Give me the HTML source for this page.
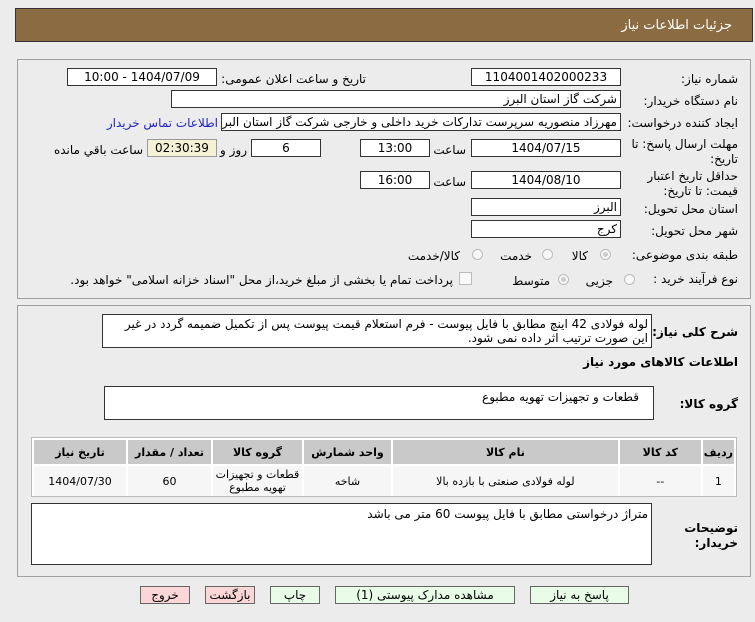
<!DOCTYPE html>
<html><head><meta charset="utf-8"><style>
body{margin:0;width:755px;height:622px;background:#ececec;position:relative;overflow:hidden;font-family:"DejaVu Sans","Liberation Sans",sans-serif;font-size:12px;color:#000}
.a{position:absolute}
.hdr{left:15px;top:8px;width:738px;height:34px;background:#8b6b42;border:1px solid #333;box-sizing:border-box}
.hdr span{position:absolute;right:20px;top:9px;color:#fff;font-size:13px}
.panel{border:1px solid #a0a0a0;background:#ececec;box-sizing:border-box}
.in{background:#fff;border:1px solid #333;box-sizing:border-box;height:18px;line-height:16px;padding:0 3px;white-space:nowrap;overflow:hidden;direction:rtl;font-size:12px}
.c{text-align:center}
.l{direction:rtl;white-space:nowrap;text-align:right}
.rad{width:11px;height:11px;border:1px solid #bbb;border-radius:50%;background:#f8f8f8;box-sizing:border-box}
.rad.on::after{content:"";position:absolute;left:2px;top:2px;width:5px;height:5px;border-radius:50%;background:#ccc}
table{border-collapse:separate;border-spacing:2px;font-size:11px}
th{background:#c9c9c9;height:22px;font-weight:bold}
td{background:#f6f6f6;height:28px;text-align:center}
.btn{height:18px;border:1px solid #666;box-sizing:border-box;text-align:center;line-height:16px;font-size:12px;background:#e8fce8}
.pk{background:#fbd6d6}
</style></head><body>
<div class="a hdr"><span>جزئیات اطلاعات نیاز</span></div>

<div class="a panel" style="left:17px;top:59px;width:734px;height:240px"></div>
<div class="a l" style="right:17px;top:72px">شماره نیاز:</div>
<div class="a in c" style="left:471px;top:68px;width:150px">1104001402000233</div>
<div class="a l" style="right:389px;top:72px">تاریخ و ساعت اعلان عمومی:</div>
<div class="a in c" style="left:67px;top:68px;width:150px">1404/07/09 - 10:00</div>

<div class="a l" style="right:17px;top:94px">نام دستگاه خریدار:</div>
<div class="a in" style="left:171px;top:90px;width:450px">شرکت گاز استان البرز</div>

<div class="a l" style="right:17px;top:116px">ایجاد کننده درخواست:</div>
<div class="a in" style="left:221px;top:113px;width:400px">مهرزاد منصوریه سرپرست تدارکات خرید داخلی و خارجی شرکت گاز استان البرز</div>
<div class="a l" style="right:537px;top:116px;color:#2222cc">اطلاعات تماس خریدار</div>

<div class="a l" style="right:17px;top:137px;line-height:15px">مهلت ارسال پاسخ: تا<br>تاریخ:</div>
<div class="a in c" style="left:471px;top:139px;width:150px">1404/07/15</div>
<div class="a l" style="right:289px;top:143px">ساعت</div>
<div class="a in c" style="left:360px;top:139px;width:70px">13:00</div>
<div class="a in c" style="left:251px;top:139px;width:70px">6</div>
<div class="a l" style="right:508px;top:143px">روز و</div>
<div class="a in c" style="left:147px;top:139px;width:70px;background:#f4f2d4;border-color:#999">02:30:39</div>
<div class="a l" style="right:612px;top:143px">ساعت باقي مانده</div>

<div class="a l" style="right:17px;top:169px;line-height:15px">حداقل تاریخ اعتبار<br>قیمت: تا تاریخ:</div>
<div class="a in c" style="left:471px;top:171px;width:150px">1404/08/10</div>
<div class="a l" style="right:289px;top:175px">ساعت</div>
<div class="a in c" style="left:360px;top:171px;width:70px">16:00</div>

<div class="a l" style="right:17px;top:202px">استان محل تحویل:</div>
<div class="a in" style="left:471px;top:198px;width:150px">البرز</div>
<div class="a l" style="right:17px;top:224px">شهر محل تحویل:</div>
<div class="a in" style="left:471px;top:220px;width:150px">کرج</div>

<div class="a l" style="right:17px;top:248px">طبقه بندی موضوعی:</div>
<div class="a rad on" style="left:600px;top:249px"></div><div class="a l" style="right:167px;top:249px">کالا</div>
<div class="a rad" style="left:542px;top:249px"></div><div class="a l" style="right:223px;top:249px">خدمت</div>
<div class="a rad" style="left:472px;top:249px"></div><div class="a l" style="right:295px;top:249px">کالا/خدمت</div>

<div class="a l" style="right:17px;top:272px">نوع فرآیند خرید :</div>
<div class="a rad" style="left:624px;top:274px"></div><div class="a l" style="right:142px;top:274px">جزیی</div>
<div class="a rad on" style="left:558px;top:274px"></div><div class="a l" style="right:205px;top:274px">متوسط</div>
<div class="a" style="left:459px;top:272px;width:11px;height:11px;border:1px solid #bbb;background:#f8f8f8"></div>
<div class="a l" style="right:302px;top:273px">پرداخت تمام یا بخشی از مبلغ خرید،از محل "اسناد خزانه اسلامی" خواهد بود.</div>

<div class="a panel" style="left:17px;top:305px;width:734px;height:272px"></div>
<div class="a l" style="right:17px;top:325px;font-weight:bold">شرح کلی نیاز:</div>
<div class="a in" style="left:102px;top:314px;width:550px;height:34px;white-space:normal;line-height:14px;padding-top:2px">لوله فولادی 42 اینچ مطابق با فایل پیوست - فرم استعلام قیمت پیوست پس از تکمیل ضمیمه گردد در غیر این صورت ترتیب اثر داده نمی شود.</div>
<div class="a l" style="right:17px;top:355px;font-weight:bold">اطلاعات کالاهای مورد نیاز</div>
<div class="a l" style="right:17px;top:397px;font-weight:bold">گروه کالا:</div>
<div class="a in" style="left:104px;top:386px;width:550px;height:34px;padding:2px 14px">قطعات و تجهیزات تهویه مطبوع</div>

<div class="a" style="left:31px;top:437px;width:706px;height:60px;border:1px solid #bbb;background:#fff;box-sizing:border-box"></div>
<table class="a" style="left:32px;top:438px;width:704px;direction:rtl">
<tr><th style="width:26px">ردیف</th><th style="width:79px">کد کالا</th><th>نام کالا</th><th style="width:85px">واحد شمارش</th><th style="width:87px">گروه کالا</th><th style="width:81px">تعداد / مقدار</th><th style="width:90px">تاریخ نیاز</th></tr>
<tr><td>1</td><td>--</td><td>لوله فولادی صنعتی با بازده بالا</td><td>شاخه</td><td style="line-height:13px">قطعات و تجهیزات<br>تهویه مطبوع</td><td>60</td><td>1404/07/30</td></tr>
</table>

<div class="a l" style="right:17px;top:521px;font-weight:bold;line-height:15px">توضیحات<br>خریدار:</div>
<div class="a in" style="left:31px;top:503px;width:621px;height:62px;padding-top:2px">متراژ درخواستی مطابق با فایل پیوست 60 متر می باشد</div>

<div class="a btn" style="left:530px;top:586px;width:99px">پاسخ به نیاز</div>
<div class="a btn" style="left:335px;top:586px;width:180px">مشاهده مدارک پیوستی (1)</div>
<div class="a btn" style="left:270px;top:586px;width:50px">چاپ</div>
<div class="a btn pk" style="left:205px;top:586px;width:50px">بازگشت</div>
<div class="a btn pk" style="left:140px;top:586px;width:50px">خروج</div>
</body></html>
